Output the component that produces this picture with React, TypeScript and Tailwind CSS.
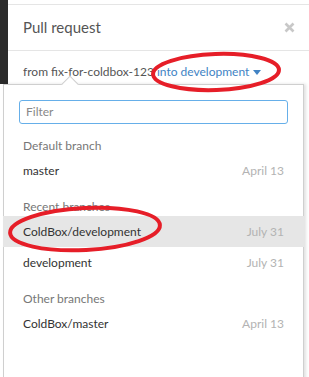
import React from 'react';

type Branch = { name: string; date: string; active?: boolean };

const sections: { title: string; branches: Branch[] }[] = [
  { title: 'Default branch', branches: [{ name: 'master', date: 'April 13' }] },
  {
    title: 'Recent branches',
    branches: [
      { name: 'ColdBox/development', date: 'July 31', active: true },
      { name: 'development', date: 'July 31' },
    ],
  },
  { title: 'Other branches', branches: [{ name: 'ColdBox/master', date: 'April 13' }] },
];

const BranchRow: React.FC<{ branch: Branch }> = ({ branch }) => (
  <div
    className={`flex items-center justify-between h-[31px] px-[20px] text-[12px] ${
      branch.active ? 'bg-[#e6e6e6]' : ''
    }`}
  >
    <span className="text-[#333]">{branch.name}</span>
    <span className="text-[#b3b3b3]">{branch.date}</span>
  </div>
);

export default function App() {
  return (
    <div
      className="relative w-[309px] h-[377px] overflow-hidden bg-white"
      style={{ fontFamily: 'Lato, "Noto Sans", sans-serif' }}
    >
      <div className="flex h-full">
        <div className="w-[8px] h-[84px] bg-[#2b2b2b]" />
        <div className="flex-1 flex flex-col pt-[4px]">
          <div className="border-t border-[#e5e5e5] h-[47px] flex items-center justify-between pl-[15px] pr-[14px] border-b">
            <span className="text-[15px] text-[#555]">Pull request</span>
            <svg width="11" height="11" viewBox="0 0 11 11" className="text-[#c8c8c8]">
              <path d="M1.5 1.5 L9.5 9.5 M9.5 1.5 L1.5 9.5" stroke="currentColor" strokeWidth="2.6" />
            </svg>
          </div>
          <div className="flex items-center pl-[15px] pt-[12px] text-[12px] text-[#555] whitespace-nowrap">
            <span>from fix-for-coldbox-123</span>
            <span className="text-[#4183c4] ml-[3px]">into development</span>
            <svg width="8" height="6" viewBox="0 0 8 6" className="ml-[4px] mt-[1px] text-[#4183c4]">
              <path d="M0 0 H8 L4 5 Z" fill="currentColor" />
            </svg>
          </div>
        </div>
      </div>

      {/* branch dropdown */}
      <div className="absolute left-[3px] top-[84px] w-[301px] h-[320px] bg-white border border-[#cfcfcf] shadow-[2px_0_3px_rgba(0,0,0,0.12)]">
        <div className="absolute -top-[7px] left-[60px] w-[12px] h-[12px] rotate-45 bg-white border-l border-t border-[#cfcfcf]" />
        <div className="relative px-[15px] pt-[15px]">
          <div className="h-[24px] rounded-[3px] border border-[#66afe9] flex items-center px-[6px] text-[12px] text-[#888]">
            Filter
          </div>
        </div>
        <div className="mt-[10px] -mx-px">
          {sections.map((s, i) => (
            <div key={s.title} className={i > 0 ? 'mt-[9px]' : ''}>
              <div className="h-[21px] flex items-end px-[20px] text-[12px] text-[#777]">{s.title}</div>
              {s.branches.map(b => (
                <BranchRow key={b.name} branch={b} />
              ))}
            </div>
          ))}
        </div>
      </div>

      {/* red annotation marks */}
      <svg className="absolute inset-0 pointer-events-none" width="309" height="377">
        <ellipse cx="216" cy="72" rx="63" ry="18" fill="none" stroke="#e61e28" strokeWidth="4" transform="rotate(-2 216 72)" />
        <ellipse cx="85" cy="229" rx="75" ry="21" fill="none" stroke="#e61e28" strokeWidth="4" transform="rotate(-3 85 229)" />
      </svg>
    </div>
  );
}
